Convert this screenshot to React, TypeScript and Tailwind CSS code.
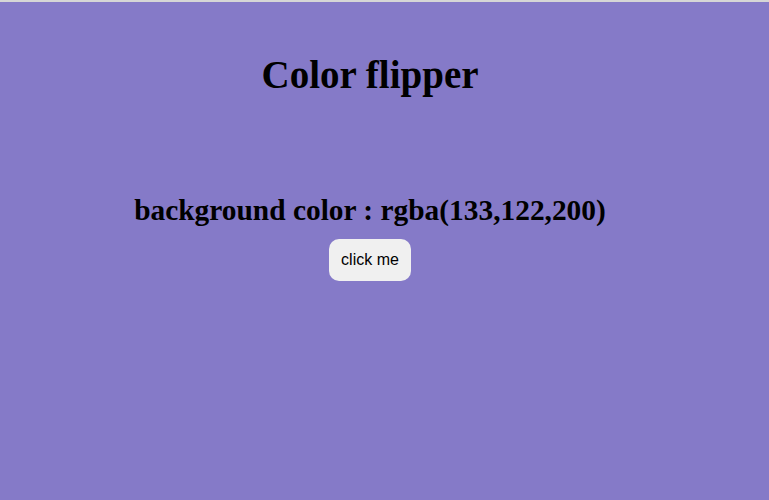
export default function App() {
  return (
    <div className="min-h-[500px] w-full bg-[#857ac8] border-t-2 border-[#d6d6d6]">
      <div className="w-[740px] flex flex-col items-center font-['Liberation_Serif',serif] text-black">
        <h1 className="mt-[50px] text-[39px] font-bold leading-[45px]">
          Color flipper
        </h1>
        <h2 className="mt-[96px] text-[29.4px] font-bold leading-[34px]">
          background color : rgba(133,122,200)
        </h2>
        <button className="mt-[12px] h-[42px] px-[12px] rounded-[10px] bg-[#f0f0f0] text-[16px] text-black font-['Liberation_Sans',Arial,sans-serif]">
          click me
        </button>
      </div>
    </div>
  );
}
